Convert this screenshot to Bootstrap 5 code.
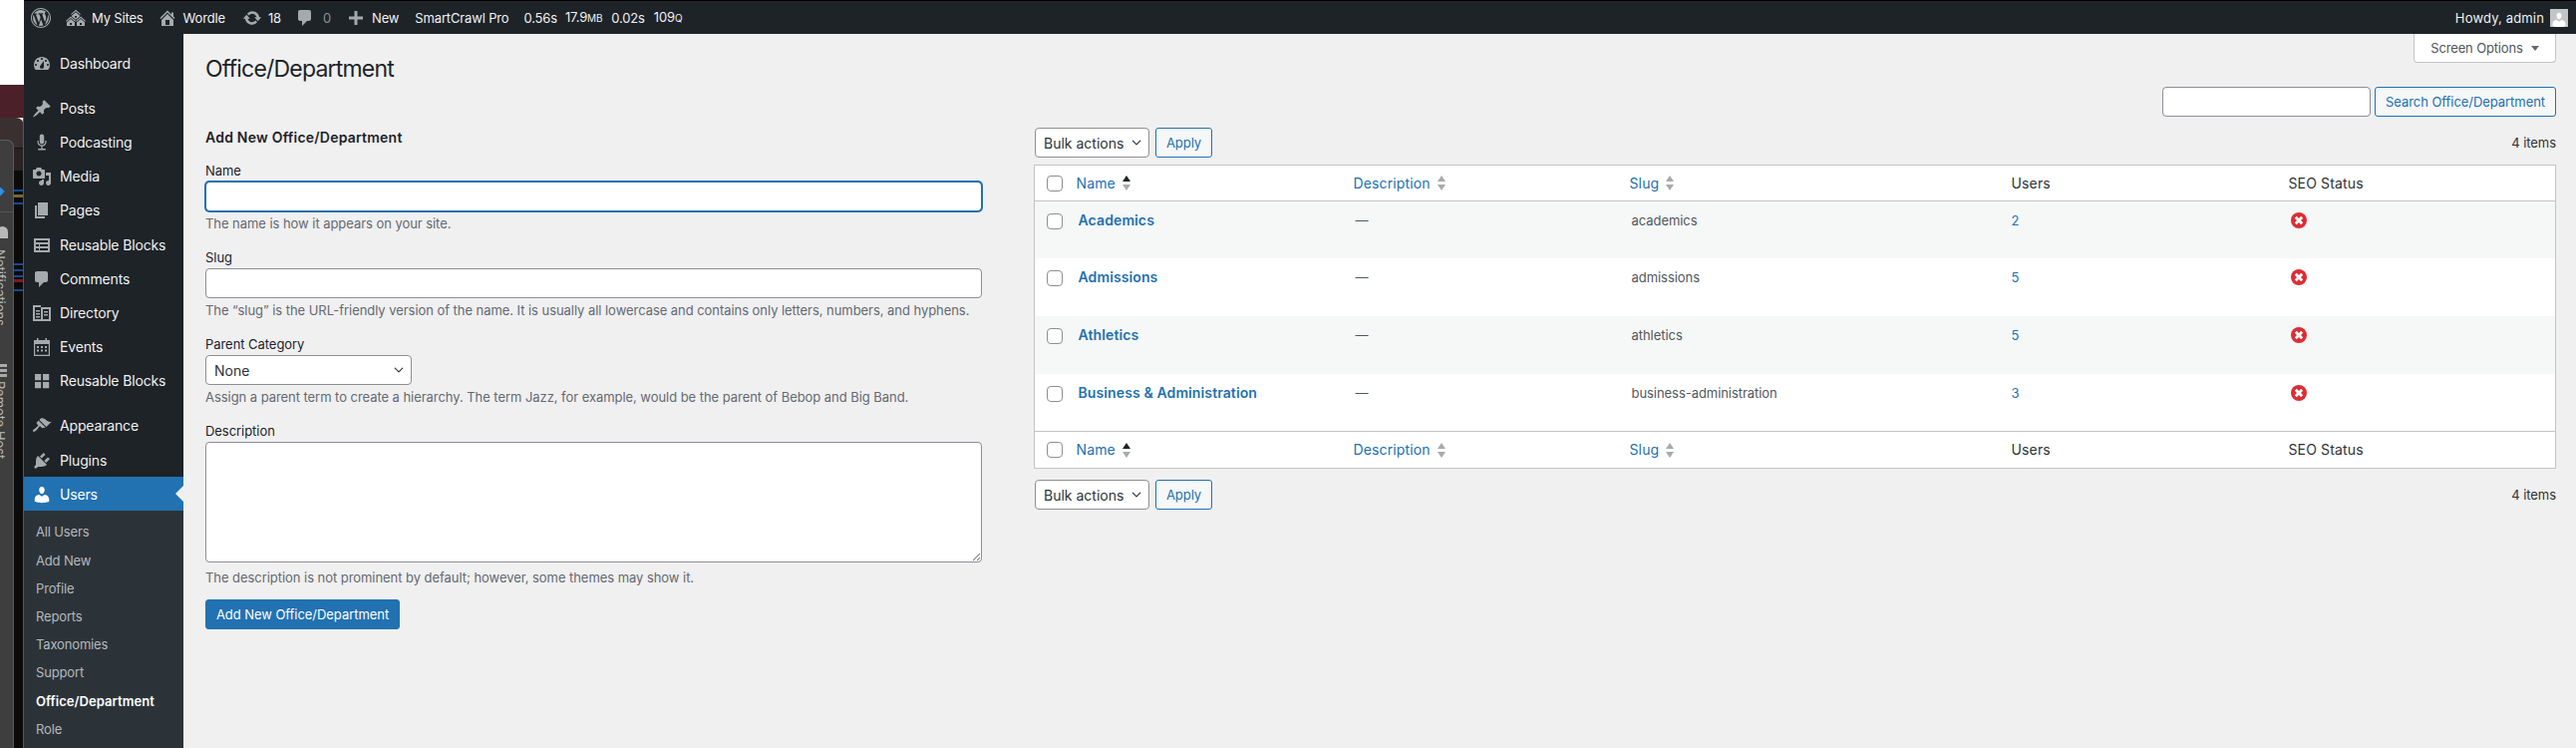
<!DOCTYPE html>
<html lang="en">
<head>
  <meta charset="UTF-8" />
  <meta name="viewport" content="width=device-width, initial-scale=1" />
  <title>Office/Department</title>
  <link href="https://cdn.jsdelivr.net/npm/bootstrap@5.3.0/dist/css/bootstrap.min.css" rel="stylesheet" />
  <style>
    html, body { height: 750px; overflow: hidden; }
    body {
      font-family: "Inter", "Liberation Sans", sans-serif;
      font-size: 13px;
      letter-spacing: -0.004em;
      line-height: 18px;
      color: #2c3338;
      background: #fff;
    }
    a { text-decoration: none; color: #2271b1; }
    svg { display: block; flex: none; fill: currentColor; }

    /* desktop peeking out on the left */
    .desk-strip { width: 24px; height: 750px; position: relative; overflow: hidden; flex: none; background: #fff; }
    .desk-strip > div { position: absolute; }
    .desk-maroon { left: 0; top: 85px; width: 24px; height: 33px; background: #4b2029; }
    .desk-tab { left: 0; top: 118px; width: 24px; height: 30px; background: #3a302f; border-top-right-radius: 8px; }
    .desk-tab2 { left: 0; top: 148px; width: 24px; height: 23px; background: #2a2323; border-top: 1px solid #111; }
    .desk-black { left: 0; top: 171px; width: 24px; height: 579px; background: #0b0b0b; }
    .desk-edge { left: 23px; top: 118px; width: 1px; height: 632px; background: #55585b; }
    .desk-panel { left: 0; top: 140px; width: 14px; height: 610px; background: #3e3e3e; border-right: 1px solid #5b5b5b; border-top: 1px solid #5b5b5b; border-top-right-radius: 7px; }
    .desk-rule { left: 0; top: 212px; width: 13px; height: 1px; background: #555; }
    .desk-dot { left: -5px; top: 188px; width: 8px; height: 8px; background: #2f8fe8; transform: rotate(45deg); }
    .desk-bell { left: -3px; top: 227px; width: 11px; height: 12px; background: #b9b9b9; border-radius: 6px 6px 0 0; }
    .desk-bars { left: 0; top: 365px; width: 7px; height: 13px; border-top: 3px solid #a9a9a9; border-bottom: 3px solid #a9a9a9; }
    .desk-bars::after { content: ""; display: block; height: 3px; margin-top: 2px; background: #a9a9a9; }
    .desk-stripe { left: 14px; width: 9px; height: 2px; background: #174a8b; }
    .desk-label { left: -9px; writing-mode: vertical-rl; font-size: 13px; color: #b9b9b9; white-space: nowrap; }

    /* admin bar */
    .wp-topbar { height: 34px; background: #1d2327; border-top: 1px solid #000; color: #f0f0f1; padding-left: 7px; padding-right: 8px; letter-spacing: -0.012em; }
    .wp-topbar svg { color: #a7aaad; }
    .qm-unit { font-size: 10px; }
    .bar-dim { color: #8c8f94; }
    .bar-howdy { gap: 6px; letter-spacing: 0.012em; }
    .bar-avatar { width: 18px; height: 18px; background: #c3c4c7; color: #fff; overflow: hidden; }
    .bar-avatar svg { color: #fff; }

    /* side menu */
    .side-menu { width: 160px; background: #1d2327; height: 716px; flex: none; padding-top: 12px; letter-spacing: -0.012em; }
    .menu-item { height: 34.2px; padding-left: 8px; padding-top: 1px; gap: 8px; color: #f0f0f1; font-size: 14px; position: relative; }
    .menu-item svg { color: #a7aaad; }
    .menu-gap { margin-top: 11px; }
    .menu-item.on { background: #2271b1; color: #fff; }
    .menu-item.on svg { color: #fff; }
    .menu-item.on::after {
      content: ""; position: absolute; right: 0; top: 50%; margin-top: -8px;
      border: 8px solid transparent; border-right-color: #f0f0f1; border-left: 0;
    }
    .sub-menu { background: #2c3338; height: 240px; padding-top: 7px; }
    .sub-menu a { display: block; height: 28.2px; line-height: 28px; padding-left: 12px; color: #b4b9be; }
    .sub-menu a.on { color: #fff; font-weight: 600; letter-spacing: 0.004em; }

    /* main area */
    .wp-main { background: #f0f0f1; padding: 0 20px 0 22px; height: 716px; }
    .page-title { font-size: 23px; font-weight: 400; line-height: 30px; margin: 20px 0 0; color: #1d2327; letter-spacing: -0.035em; }
    .screen-tab { width: 143px; height: 29px; background: #fff; border: 1px solid #c3c4c7; border-top: 0; border-radius: 0 0 4px 4px; color: #50575e; gap: 8px; letter-spacing: -0.012em; }
    .tri-down { border: 4px solid transparent; border-top: 5px solid #646970; border-bottom: 0; }
    .form-side { width: 779px; flex: none; }
    .list-side { margin-left: 52px; padding-top: 3px; flex: 1 1 auto; min-width: 0; }
    .form-title { font-size: 14px; font-weight: 600; line-height: 20px; margin: 44px 0 14px; color: #1d2327; letter-spacing: 0.016em; }
    .wp-label { display: block; margin-bottom: 2px; color: #1d2327; line-height: 18px; }
    .field-hint { margin: 3px 0 16px; color: #646970; line-height: 18px; }
    .wp-input.form-control, .wp-input.form-select {
      height: 30px; min-height: 30px; padding: 0 8px; font-size: 14px; color: #2c3338;
      border: 1px solid #8c8f94; border-radius: 4px; letter-spacing: 0; box-shadow: none;
    }
    .wp-input.form-select { padding-right: 24px; background-position: right 6px center; background-size: 12px 10px; }
    .wp-input.is-focus { border-color: #2271b1; box-shadow: 0 0 0 1px #2271b1; }
    textarea.wp-input.form-control { height: 121px; }
    .parent-select.form-select { width: 207px; }
    .bulk-select.form-select { width: 115px; margin-left: 1px; }
    .search-box.form-control { width: 209px; }
    .btn-wp { height: 30px; font-size: 13px; line-height: 28px; padding: 0; border-radius: 3px; letter-spacing: -0.004em; white-space: nowrap; }
    .btn-wp.btn-fill { background: #2271b1; border: 1px solid #2271b1; color: #fff; width: 195px; }
    .btn-wp.btn-line { background: #f6f7f7; border: 1px solid #2271b1; color: #2271b1; }
    .btn-apply { width: 57px; }
    .btn-search { width: 182px; }

    /* terms table */
    .term-table { table-layout: fixed; border: 1px solid #c3c4c7; background: #fff; margin-bottom: 0; font-size: 13px; color: #50575e; }
    .term-table > :not(caption) > * > * {
      padding: 0 8px; border-bottom: 0; box-shadow: none; background: transparent;
      vertical-align: middle; color: inherit; font-weight: 400;
    }
    .term-table thead tr > * { height: 36px; border-bottom: 1px solid #c3c4c7; color: #2c3338; font-size: 14px; letter-spacing: 0.01em; }
    .term-table tfoot tr > * { height: 37px; border-top: 1px solid #c3c4c7; color: #2c3338; font-size: 14px; letter-spacing: 0.01em; }
    .term-table tbody td { height: 57.75px; vertical-align: top; padding-top: 9px; line-height: 20px; }
    .term-table > tbody > tr:nth-child(odd) > td { background: #f6f7f7; }
    .term-table > :not(caption) > * > .cell-check { padding: 0 0 0 12px; }
    .term-table tbody .cell-check { padding-top: 12px !important; line-height: 0 !important; }
    .term-table .form-check-input { width: 16px; height: 16px; margin: 0; border: 1px solid #8c8f94; border-radius: 4px; display: block; }
    .term-table > tbody > tr > td.cell-name, .term-table > tbody > tr > td.cell-pad { padding-left: 10px; }
    .term-name { font-size: 14px; font-weight: 600; color: #2271b1; letter-spacing: 0.008em; }
    .sort-link { gap: 7px; }
    .sort-link svg { color: #a7aaad; }
    .seo-cross { margin: 2px 0 0 2px; }
  </style>
</head>
<body>
  <!-- icon sprites -->
  <svg width="0" height="0" style="position:absolute">
    <symbol id="i-wp" viewBox="0 0 20 20"><path d="M20 10c0-5.52-4.48-10-10-10S0 4.48 0 10s4.48 10 10 10 10-4.48 10-10zM10 1.01c4.97 0 8.99 4.02 8.99 8.99s-4.02 8.99-8.99 8.99S1.01 14.97 1.01 10 5.03 1.01 10 1.01zM8.01 14.82L4.96 6.61c.49-.03 1.05-.08 1.05-.08.43-.05.38-1.01-.06-.99 0 0-1.29.1-2.13.1-.15 0-.33 0-.52-.01 1.44-2.17 3.9-3.6 6.7-3.6 2.09 0 3.99.79 5.41 2.09-.6-.08-1.45.35-1.45 1.42 0 .66.38 1.22.79 1.88.31.54.5 1.22.5 2.21 0 1.34-1.27 4.48-1.27 4.48l-2.71-7.5c.48-.03.75-.16.75-.16.43-.05.38-1.1-.05-1.08 0 0-1.3.11-2.14.11-.78 0-2.11-.11-2.11-.11-.43-.02-.48 1.06-.05 1.08l.84.08 1.12 3.04zm6.02 2.15L16.64 10s.67-1.69.39-3.81c.63 1.14.94 2.42.94 3.81 0 2.96-1.56 5.58-3.94 6.97zM2.68 6.77L6.5 17.25c-2.67-1.3-4.47-4.08-4.47-7.25 0-1.16.2-2.23.65-3.23zm7.45 4.53l2.29 6.25c-.75.27-1.57.42-2.42.42-.72 0-1.41-.11-2.06-.3z"/></symbol>
    <symbol id="i-sites" viewBox="0 0 20 20"><path d="M14.27 6.87L10 3.14 5.73 6.87 5 6.14l5-4.38 5 4.38zM14 8.42l-4.05 3.43L6 8.38v-.74l4-3.5 4 3.5v.78zM11 9.7V8H9v1.7h2zm-1.73 4.03L5 10 .73 13.73 0 13l5-4.38L10 13zm10 0L15 10l-4.27 3.73L10 13l5-4.38L20 13zM5 11l4 3.5V18H1v-3.5zm10 0l4 3.5V18h-8v-3.5zM6 17v-2H4v2h2zm10 0v-2h-2v2h2z"/></symbol>
    <symbol id="i-home" viewBox="0 0 20 20"><path d="M16 8.5l1.53 1.53-1.06 1.06L10 4.62l-6.47 6.47-1.06-1.06L10 2.5l4 4v-2h2v4zm-6-2.46l6 5.99V18H4v-5.97zM12 17v-5H8v5h4z"/></symbol>
    <symbol id="i-update" viewBox="0 0 20 20"><path d="M10.2 3.28c3.53 0 6.43 2.61 6.92 6h2.08l-3.5 4-3.5-4h2.32c-.45-1.97-2.21-3.45-4.32-3.45-1.45 0-2.73.71-3.54 1.78L4.95 5.66C6.23 4.2 8.11 3.28 10.2 3.28zm-.4 13.44c-3.52 0-6.43-2.61-6.92-6H.8l3.5-4c1.17 1.33 2.33 2.67 3.5 4H5.48c.45 1.97 2.21 3.45 4.32 3.45 1.45 0 2.73-.71 3.54-1.78l1.71 1.95c-1.28 1.46-3.15 2.38-5.25 2.38z"/></symbol>
    <symbol id="i-comment" viewBox="0 0 20 20"><path d="M5 2h9c1.1 0 2 .9 2 2v7c0 1.1-.9 2-2 2h-2l-5 5v-5H5c-1.1 0-2-.9-2-2V4c0-1.1.9-2 2-2z"/></symbol>
    <symbol id="i-plus" viewBox="0 0 20 20"><path d="M17 8.5v3h-5.5V17h-3v-5.5H3v-3h5.5V3h3v5.5z"/></symbol>
    <symbol id="i-dash" viewBox="0 0 20 20"><path fill-rule="evenodd" d="M3.76 16h12.48c1.1-1.37 1.76-3.11 1.76-5 0-4.42-3.58-8-8-8s-8 3.58-8 8c0 1.89.66 3.63 1.76 5zM10 4c.55 0 1 .45 1 1s-.45 1-1 1-1-.45-1-1 .45-1 1-1zM6 6c.55 0 1 .45 1 1s-.45 1-1 1-1-.45-1-1 .45-1 1-1zm8 0c.55 0 1 .45 1 1s-.45 1-1 1-1-.45-1-1 .45-1 1-1zm-5.37 5.55L12 7v6c0 1.1-.9 2-2 2s-2-.9-2-2c0-.57.24-1.08.63-1.45zM4 10c.55 0 1 .45 1 1s-.45 1-1 1-1-.45-1-1 .45-1 1-1zm12 0c.55 0 1 .45 1 1s-.45 1-1 1-1-.45-1-1 .45-1 1-1z"/></symbol>
    <symbol id="i-pin" viewBox="0 0 20 20"><path d="M10.44 3.02l1.82-1.82 6.36 6.35-1.83 1.82c-1.05-.68-2.48-.57-3.41.36l-.75.75c-.92.93-1.04 2.35-.35 3.41l-1.83 1.82-2.41-2.41-2.8 2.79c-.42.42-3.38 2.71-3.8 2.29s1.86-3.39 2.28-3.81l2.79-2.79L4.1 9.36l1.83-1.82c1.05.69 2.48.57 3.4-.36l.75-.75c.93-.92 1.05-2.35.36-3.41z"/></symbol>
    <symbol id="i-mic" viewBox="0 0 20 20"><path d="M10 1.5c1.3 0 2.2 1 2.2 2.2v5.6c0 1.3-1 2.2-2.2 2.2s-2.2-1-2.2-2.2V3.7c0-1.3 1-2.2 2.2-2.2zM5.5 8h1.2v1.3c0 1.8 1.5 3.3 3.3 3.3s3.3-1.5 3.3-3.3V8h1.2v1.3c0 2.3-1.7 4.2-3.9 4.5V16h3.2v1.6H6.200V16h3.2v-2.200c-2.200-.3-3.900-2.200-3.900-4.500z"/></symbol>
    <symbol id="i-media" viewBox="0 0 20 20"><path d="M13 11V4c0-.55-.45-1-1-1h-1.67L9 1H5L3.67 3H2c-.55 0-1 .45-1 1v7c0 .55.45 1 1 1h10c.55 0 1-.45 1-1zM7 4.5c1.38 0 2.5 1.12 2.500 2.500S8.380 9.500 7 9.500 4.500 8.380 4.500 7 5.620 4.500 7 4.500zM14 6h5v10.500c0 1.380-1.120 2.500-2.500 2.500S14 17.880 14 16.500s1.120-2.500 2.500-2.500c.17 0 .34.02.5.05V9h-3V6zm-4 8.050V13h2v3.500c0 1.380-1.120 2.500-2.500 2.500S7 17.880 7 16.500 8.120 14 9.500 14c.17 0 .34.02.5.05z"/></symbol>
    <symbol id="i-pages" viewBox="0 0 20 20"><path d="M6 15V2h10v13H6zm-1 1h8v2H3V5h2v11z"/></symbol>
    <symbol id="i-table" viewBox="0 0 20 20"><path fill-rule="evenodd" d="M18 17V3H2v14h16zM16 7H4V5h12v2zm-9 4H4V9h3v2zm9 0H8V9h8v2zm-9 4H4v-2h3v2zm9 0H8v-2h8v2z"/></symbol>
    <symbol id="i-dir" viewBox="0 0 20 20"><path fill-rule="evenodd" d="M1 2h8v2h10v14H1V2zm2 2v12h6V4H3zm8 2v10h6V6h-6zM4 7h4v1.500H4V7zm0 3h4v1.500H4V10zm0 3h4v1.500H4V13zm8-5h4v1.500h-4V8zm0 3h4v1.500h-4V11z"/></symbol>
    <symbol id="i-cal" viewBox="0 0 20 20"><path fill-rule="evenodd" d="M5 1h1.500v2h7V1H15v2h3v16H2V3h3V1zM3.200 7v10.800h13.600V7H3.200zM5 9h2v2H5V9zm4 0h2v2H9V9zm4 0h2v2h-2V9zm-8 3.500h2v2H5v-2zm4 0h2v2H9v-2zm4 0h2v2h-2v-2z"/></symbol>
    <symbol id="i-blocks" viewBox="0 0 20 20"><path d="M3 3h6.200v6.200H3zM11 3h6.200v6.200H11zM3 11h6.200v6.200H3zM11 11h6.200v6.200H11z"/></symbol>
    <symbol id="i-brush" viewBox="0 0 20 20"><path d="M14.480 11.060L7.410 3.990l1.500-1.500c.5-.56 2.300-.47 3.510.32 1.210.8 1.430 1.280 2.910 2.100 1.180.64 2.450 1.260 4.450.85zm-.71.71L6.700 4.700 4.930 6.470c-.39.39-.39 1.020 0 1.410l1.060 1.060c.39.39.39 1.030 0 1.420-.6.6-1.430 1.110-2.210 1.690-.35.26-.7.53-1.010.84C1.430 13.230.4 14.770 1.200 15.600c.79.8 2.370-.25 3.710-1.550.31-.31.58-.66.85-1.020.57-.77 1.080-1.610 1.700-2.220.39-.39 1.020-.39 1.410 0L9.930 12c.39.39 1.020.39 1.410 0z"/></symbol>
    <symbol id="i-plug" viewBox="0 0 20 20"><path d="M13.110 4.360L9.870 7.600 8 5.730l3.240-3.240c.35-.34 1.050-.2 1.560.32.52.51.66 1.210.31 1.550zm-8 1.770l.91-1.120 9.010 9.010-1.190.84c-.71.71-2.630 1.160-3.820 1.160H6.140L4.900 17.260c-.59.59-1.540.59-2.120 0-.59-.58-.59-1.530 0-2.120l1.240-1.240v-3.880c0-1.130.4-3.190 1.090-3.890zm7.260 3.970l3.240-3.240c.34-.35 1.040-.21 1.550.31.52.51.66 1.210.31 1.550l-3.240 3.250z"/></symbol>
    <symbol id="i-user" viewBox="0 0 20 20"><path d="M10 9.250c-2.270 0-2.730-3.440-2.730-3.440C7 4.020 7.820 2 9.970 2c2.160 0 2.980 2.020 2.710 3.810 0 0-.41 3.440-2.68 3.440zm0 2.570L12.720 10c2.390 0 4.520 2.330 4.520 4.530v2.490s-3.650 1.130-7.240 1.130c-3.650 0-7.240-1.130-7.240-1.130v-2.490c0-2.250 1.940-4.480 4.470-4.480z"/></symbol>
    <symbol id="i-sort" viewBox="0 0 8 15"><path d="M4 0l4 6H0z"/><path d="M4 15L0 9h8z"/></symbol>
    <symbol id="i-sort-on" viewBox="0 0 8 15"><path fill="#1d2327" d="M4 0l4 6H0z"/><path d="M4 15L0 9h8z"/></symbol>
    <symbol id="i-cross" viewBox="0 0 16 16"><circle cx="8" cy="8" r="8" fill="#dc2d34"/><path d="M3.800 5.800l2-2L8 6l2.200-2.200 2 2L10 8l2.200 2.200-2 2L8 10l-2.200 2.200-2-2L6 8z" fill="#fff"/></symbol>
  </svg>

  <div class="d-flex">
    <!-- Desktop behind the browser window -->
    <div class="desk-strip">
      <div class="desk-maroon"></div>
      <div class="desk-tab"></div>
      <div class="desk-tab2"></div>
      <div class="desk-black"></div>
      <div class="desk-stripe" style="top:190px"></div>
      <div class="desk-stripe" style="top:195px;height:3px;background:#6f6b3a"></div>
      <div class="desk-stripe" style="top:203px"></div>
      <div class="desk-stripe" style="top:264px"></div>
      <div class="desk-stripe" style="top:270px"></div>
      <div class="desk-stripe" style="top:276px"></div>
      <div class="desk-stripe" style="top:280px;background:#7d1a1a;height:3px"></div>
      <div class="desk-stripe" style="top:290px"></div>
      <div class="desk-edge"></div>
      <div class="desk-panel"></div>
      <div class="desk-dot"></div>
      <div class="desk-rule"></div>
      <div class="desk-bell"></div>
      <div class="desk-bars"></div>
      <div class="desk-label" style="top:250px">Notifications</div>
      <div class="desk-label" style="top:382px">Remote Host</div>
    </div>

    <div class="flex-grow-1" style="min-width:0">
      <!-- Admin bar -->
      <div class="wp-topbar d-flex align-items-center justify-content-between">
        <div class="d-flex align-items-center">
          <svg width="20" height="20"><use href="#i-wp"/></svg>
          <svg width="20" height="20" style="margin-left:15px"><use href="#i-sites"/></svg>
          <span style="margin-left:6px">My Sites</span>
          <svg width="20" height="20" style="margin-left:14px"><use href="#i-home"/></svg>
          <span style="margin-left:6px">Wordle</span>
          <svg width="20" height="20" style="margin-left:17px"><use href="#i-update"/></svg>
          <span style="margin-left:6px">18</span>
          <svg width="20" height="20" style="margin-left:14px"><use href="#i-comment"/></svg>
          <span class="bar-dim" style="margin-left:8px">0</span>
          <svg width="20" height="20" style="margin-left:15px"><use href="#i-plus"/></svg>
          <span style="margin-left:6px">New</span>
          <span style="margin-left:16px">SmartCrawl Pro</span>
          <span style="margin-left:15px">0.56s</span>
          <span style="margin-left:8px">17.9<span class="qm-unit">MB</span></span>
          <span style="margin-left:9px">0.02s</span>
          <span style="margin-left:9px">109<span class="qm-unit">Q</span></span>
        </div>
        <div class="bar-howdy d-flex align-items-center">
          <span>Howdy, admin</span>
          <div class="bar-avatar"><svg width="18" height="18" style="margin-top:2px"><use href="#i-user"/></svg></div>
        </div>
      </div>

      <div class="d-flex">
        <!-- Side menu -->
        <div class="side-menu">
          <a class="menu-item d-flex align-items-center" href="#"><svg width="20" height="20"><use href="#i-dash"/></svg>Dashboard</a>
          <a class="menu-item menu-gap d-flex align-items-center" href="#"><svg width="20" height="20"><use href="#i-pin"/></svg>Posts</a>
          <a class="menu-item d-flex align-items-center" href="#"><svg width="20" height="20"><use href="#i-mic"/></svg>Podcasting</a>
          <a class="menu-item d-flex align-items-center" href="#"><svg width="20" height="20"><use href="#i-media"/></svg>Media</a>
          <a class="menu-item d-flex align-items-center" href="#"><svg width="20" height="20"><use href="#i-pages"/></svg>Pages</a>
          <a class="menu-item d-flex align-items-center" href="#"><svg width="20" height="20"><use href="#i-table"/></svg>Reusable Blocks</a>
          <a class="menu-item d-flex align-items-center" href="#"><svg width="20" height="20"><use href="#i-comment"/></svg>Comments</a>
          <a class="menu-item d-flex align-items-center" href="#"><svg width="20" height="20"><use href="#i-dir"/></svg>Directory</a>
          <a class="menu-item d-flex align-items-center" href="#"><svg width="20" height="20"><use href="#i-cal"/></svg>Events</a>
          <a class="menu-item d-flex align-items-center" href="#"><svg width="20" height="20"><use href="#i-blocks"/></svg>Reusable Blocks</a>
          <a class="menu-item menu-gap d-flex align-items-center" href="#"><svg width="20" height="20"><use href="#i-brush"/></svg>Appearance</a>
          <a class="menu-item d-flex align-items-center" href="#"><svg width="20" height="20"><use href="#i-plug"/></svg>Plugins</a>
          <a class="menu-item on d-flex align-items-center" href="#"><svg width="20" height="20"><use href="#i-user"/></svg>Users</a>
          <div class="sub-menu">
            <a href="#">All Users</a>
            <a href="#">Add New</a>
            <a href="#">Profile</a>
            <a href="#">Reports</a>
            <a href="#">Taxonomies</a>
            <a href="#">Support</a>
            <a class="on" href="#">Office/Department</a>
            <a href="#">Role</a>
          </div>
        </div>

        <!-- Main -->
        <div class="wp-main flex-grow-1" style="min-width:0">
          <div class="d-flex justify-content-between align-items-start">
            <h1 class="page-title">Office/Department</h1>
            <button class="screen-tab d-flex align-items-center justify-content-center" type="button">Screen Options <span class="tri-down"></span></button>
          </div>

          <div class="d-flex">
            <form class="form-side">
              <h2 class="form-title">Add New Office/Department</h2>

              <label class="wp-label" for="tagName">Name</label>
              <input class="form-control wp-input is-focus" id="tagName" type="text">
              <p class="field-hint">The name is how it appears on your site.</p>

              <label class="wp-label" for="tagSlug">Slug</label>
              <input class="form-control wp-input" id="tagSlug" type="text">
              <p class="field-hint">The “slug” is the URL-friendly version of the name. It is usually all lowercase and contains only letters, numbers, and hyphens.</p>

              <label class="wp-label" for="tagParent">Parent Category</label>
              <select class="form-select wp-input parent-select" id="tagParent"><option>None</option></select>
              <p class="field-hint">Assign a parent term to create a hierarchy. The term Jazz, for example, would be the parent of Bebop and Big Band.</p>

              <label class="wp-label" for="tagDesc">Description</label>
              <textarea class="form-control wp-input d-block" id="tagDesc"></textarea>
              <p class="field-hint" style="margin:6px 0 13px">The description is not prominent by default; however, some themes may show it.</p>

              <button class="btn btn-wp btn-fill" type="button">Add New Office/Department</button>
            </form>

            <div class="list-side">
              <div class="d-flex justify-content-end gap-1">
                <input class="form-control wp-input search-box" type="search">
                <button class="btn btn-wp btn-line btn-search" type="button">Search Office/Department</button>
              </div>

              <div class="d-flex justify-content-between align-items-center" style="margin:11px 0 7px">
                <div class="d-flex" style="gap:6px">
                  <select class="form-select wp-input bulk-select"><option>Bulk actions</option></select>
                  <button class="btn btn-wp btn-line btn-apply" type="button">Apply</button>
                </div>
                <span>4 items</span>
              </div>

              <table class="table term-table">
                <colgroup>
                  <col style="width:34px"><col style="width:278px"><col style="width:277px"><col style="width:383px"><col style="width:278px"><col>
                </colgroup>
                <thead>
                  <tr>
                    <th class="cell-check"><input class="form-check-input" type="checkbox"></th>
                    <th><a class="sort-link d-inline-flex align-items-center" href="#">Name <svg width="8" height="15"><use href="#i-sort-on"/></svg></a></th>
                    <th><a class="sort-link d-inline-flex align-items-center" href="#">Description <svg width="8" height="15"><use href="#i-sort"/></svg></a></th>
                    <th><a class="sort-link d-inline-flex align-items-center" href="#">Slug <svg width="8" height="15"><use href="#i-sort"/></svg></a></th>
                    <th>Users</th>
                    <th>SEO Status</th>
                  </tr>
                </thead>
                <tbody>
                  <tr>
                    <td class="cell-check"><input class="form-check-input" type="checkbox"></td>
                    <td class="cell-name"><a class="term-name" href="#">Academics</a></td>
                    <td class="cell-pad">—</td>
                    <td class="cell-pad">academics</td>
                    <td><a href="#">2</a></td>
                    <td><svg class="seo-cross" width="16" height="16"><use href="#i-cross"/></svg></td>
                  </tr>
                  <tr>
                    <td class="cell-check"><input class="form-check-input" type="checkbox"></td>
                    <td class="cell-name"><a class="term-name" href="#">Admissions</a></td>
                    <td class="cell-pad">—</td>
                    <td class="cell-pad">admissions</td>
                    <td><a href="#">5</a></td>
                    <td><svg class="seo-cross" width="16" height="16"><use href="#i-cross"/></svg></td>
                  </tr>
                  <tr>
                    <td class="cell-check"><input class="form-check-input" type="checkbox"></td>
                    <td class="cell-name"><a class="term-name" href="#">Athletics</a></td>
                    <td class="cell-pad">—</td>
                    <td class="cell-pad">athletics</td>
                    <td><a href="#">5</a></td>
                    <td><svg class="seo-cross" width="16" height="16"><use href="#i-cross"/></svg></td>
                  </tr>
                  <tr>
                    <td class="cell-check"><input class="form-check-input" type="checkbox"></td>
                    <td class="cell-name"><a class="term-name" href="#">Business &amp; Administration</a></td>
                    <td class="cell-pad">—</td>
                    <td class="cell-pad">business-administration</td>
                    <td><a href="#">3</a></td>
                    <td><svg class="seo-cross" width="16" height="16"><use href="#i-cross"/></svg></td>
                  </tr>
                </tbody>
                <tfoot>
                  <tr>
                    <th class="cell-check"><input class="form-check-input" type="checkbox"></th>
                    <th><a class="sort-link d-inline-flex align-items-center" href="#">Name <svg width="8" height="15"><use href="#i-sort-on"/></svg></a></th>
                    <th><a class="sort-link d-inline-flex align-items-center" href="#">Description <svg width="8" height="15"><use href="#i-sort"/></svg></a></th>
                    <th><a class="sort-link d-inline-flex align-items-center" href="#">Slug <svg width="8" height="15"><use href="#i-sort"/></svg></a></th>
                    <th>Users</th>
                    <th>SEO Status</th>
                  </tr>
                </tfoot>
              </table>

              <div class="d-flex justify-content-between align-items-center" style="margin-top:11px">
                <div class="d-flex" style="gap:6px">
                  <select class="form-select wp-input bulk-select"><option>Bulk actions</option></select>
                  <button class="btn btn-wp btn-line btn-apply" type="button">Apply</button>
                </div>
                <span>4 items</span>
              </div>
            </div>
          </div>
        </div>
      </div>
    </div>
  </div>

  <script src="https://cdn.jsdelivr.net/npm/bootstrap@5.3.0/dist/js/bootstrap.bundle.min.js"></script>
</body>
</html>
